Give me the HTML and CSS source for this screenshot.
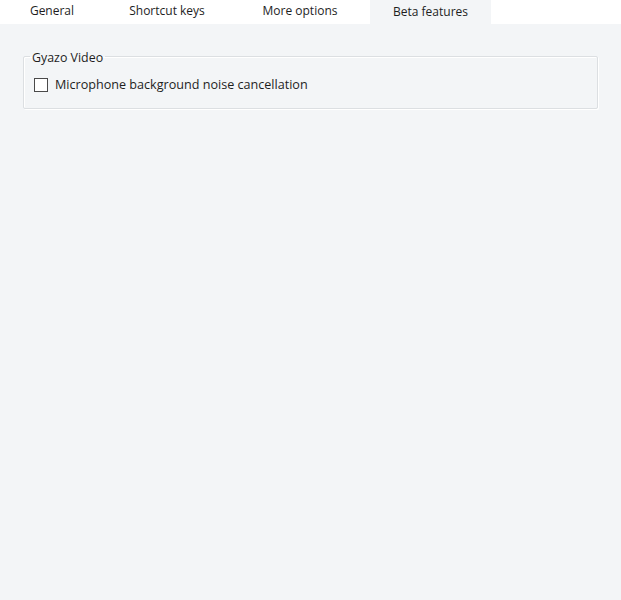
FILE: index.html
```html
<!DOCTYPE html>
<html>
<head>
<meta charset="utf-8">
<link rel="stylesheet" href="styles.css">
</head>
<body>
<div class="tabs">
  <div class="tab tab-general">General</div>
  <div class="tab tab-shortcut">Shortcut keys</div>
  <div class="tab tab-more">More options</div>
  <div class="tab tab-beta active">Beta features</div>
</div>
<div class="panel">
  <fieldset class="group">
    <legend class="legend">Gyazo Video</legend>
    <label class="check-row">
      <span class="checkbox"></span>
      <span class="check-label">Microphone background noise cancellation</span>
    </label>
  </fieldset>
</div>
</body>
</html>
```
FILE: styles.css
```css
html, body {
  margin: 0;
  padding: 0;
  height: 100%;
}
body {
  font-family: "Open Sans", "Noto Sans", "Liberation Sans", sans-serif;
  font-size: 12px;
  color: #1e1e1e;
  background: #f3f5f7;
  display: flex;
  flex-direction: column;
}
.tabs {
  display: flex;
  height: 24px;
  background: #ffffff;
}
.tab {
  display: flex;
  align-items: center;
  justify-content: center;
  height: 22px;
  line-height: 22px;
}
.tab-general { width: 104px; }
.tab-shortcut { width: 126px; }
.tab-more { width: 140px; }
.tab-beta { width: 121px; }
.tab.active {
  background: #f3f5f7;
  height: 24px;
}
.panel {
  flex: 1;
  padding: 0 23px 0 23px;
}
.group {
  margin: 24px 0 0 0;
  padding: 0 9px 0 6px;
  height: 59px;
  border: 1px solid #dcdfe2;
  border-radius: 2px;
  box-shadow: inset 1px 1px 0 #ffffff, 1px 1px 0 #ffffff;
}
.legend {
  padding: 4px 2px 0 2px;
  line-height: 12px;
  font-size: 12.4px;
}
.check-row {
  display: flex;
  align-items: center;
  gap: 7px;
  margin-top: 13px;
  margin-left: 4px;
}
.checkbox {
  width: 12px;
  height: 12px;
  border: 1px solid #4a4a4a;
  background: #ffffff;
  flex: none;
}
.check-label {
  line-height: 16px;
  font-size: 12.6px;
}
```
